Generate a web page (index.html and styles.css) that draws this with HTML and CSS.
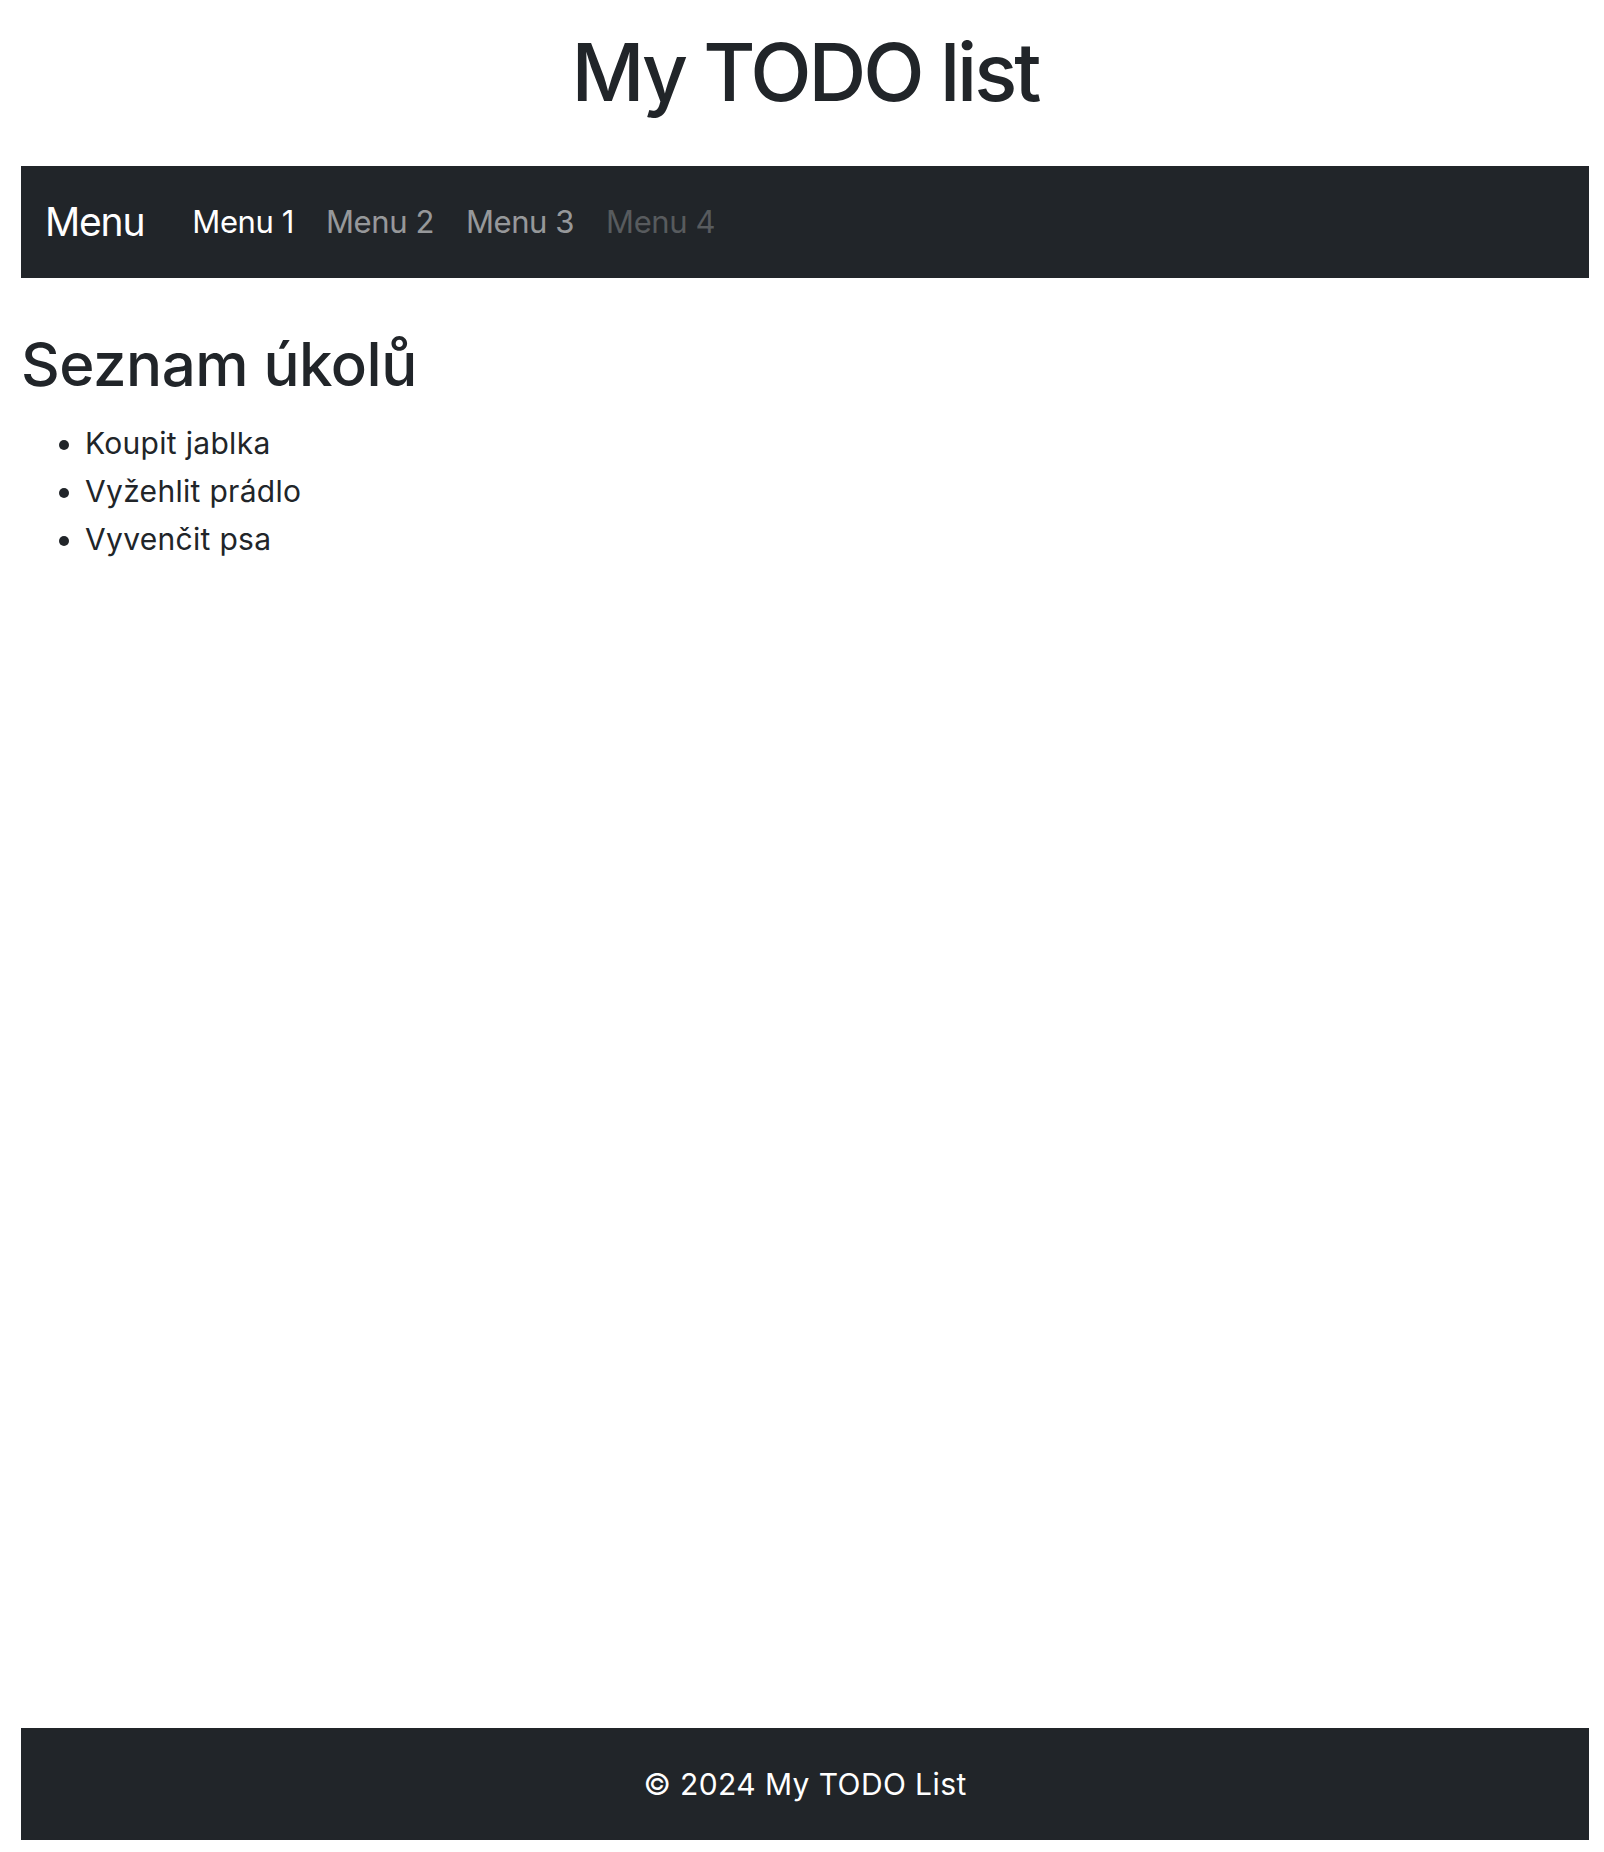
FILE: index.html
```html
<!DOCTYPE html>
<html lang="cs">
<head>
<meta charset="utf-8">
<title>My TODO list</title>
<link rel="stylesheet" href="styles.css">
</head>
<body>
<div class="page">
  <header class="site-header">
    <h1 class="site-title">My TODO list</h1>
  </header>
  <nav class="navbar">
    <a class="brand" href="#">Menu</a>
    <ul class="nav-links">
      <li><a class="nav-link active" href="#">Menu 1</a></li>
      <li><a class="nav-link" href="#">Menu 2</a></li>
      <li><a class="nav-link" href="#">Menu 3</a></li>
      <li><a class="nav-link disabled" href="#">Menu 4</a></li>
    </ul>
  </nav>
  <main class="content">
    <h2 class="section-title">Seznam úkolů</h2>
    <ul class="todo-list">
      <li>Koupit jablka</li>
      <li>Vyžehlit prádlo</li>
      <li>Vyvenčit psa</li>
    </ul>
  </main>
  <footer class="footer">
    <p class="footer-text">© 2024 My TODO List</p>
  </footer>
</div>
</body>
</html>
```

FILE: styles.css
```css
* { box-sizing: border-box; }

html, body {
  margin: 0;
  padding: 0;
}

body {
  font-family: Inter, "Noto Sans", "Liberation Sans", sans-serif;
  color: #212529;
  background: #fff;
  font-size: 30px;
  line-height: 48px;
}

.page {
  min-height: 100vh;
  display: flex;
  flex-direction: column;
  padding: 0 15px 12px 21px;
}

.site-title {
  margin: 0 0 46px;
  padding-top: 24px;
  text-align: center;
  font-size: 80px;
  line-height: 96px;
  font-weight: 500;
  letter-spacing: -3px;
}

.navbar {
  background: #212529;
  height: 112px;
  padding: 16px 24px;
  display: flex;
  align-items: center;
}

.brand {
  color: #fff;
  text-decoration: none;
  font-size: 39px;
  line-height: 60px;
  padding: 10px 0;
  margin-right: 32px;
  letter-spacing: -1.2px;
}

.nav-links {
  list-style: none;
  margin: 0;
  padding: 0;
  display: flex;
}

.nav-link {
  display: block;
  padding: 16px;
  font-size: 31px;
  line-height: 48px;
  letter-spacing: -0.4px;
  color: rgba(255, 255, 255, 0.55);
  text-decoration: none;
}

.nav-link.active { color: #fff; }
.nav-link.disabled { color: rgba(255, 255, 255, 0.25); }

.content {
  flex: 1;
}

.section-title {
  margin: 50px 0 19px;
  font-size: 60px;
  line-height: 72px;
  font-weight: 500;
  letter-spacing: -0.5px;
}

.todo-list {
  margin: 0 0 32px;
  padding-left: 64px;
  letter-spacing: 0.3px;
}

.footer {
  background: #212529;
  color: #fff;
  padding: 32px 0;
  text-align: center;
}

.footer-text {
  margin: 0;
  font-size: 30px;
  line-height: 48px;
  letter-spacing: 0.4px;
}
```
